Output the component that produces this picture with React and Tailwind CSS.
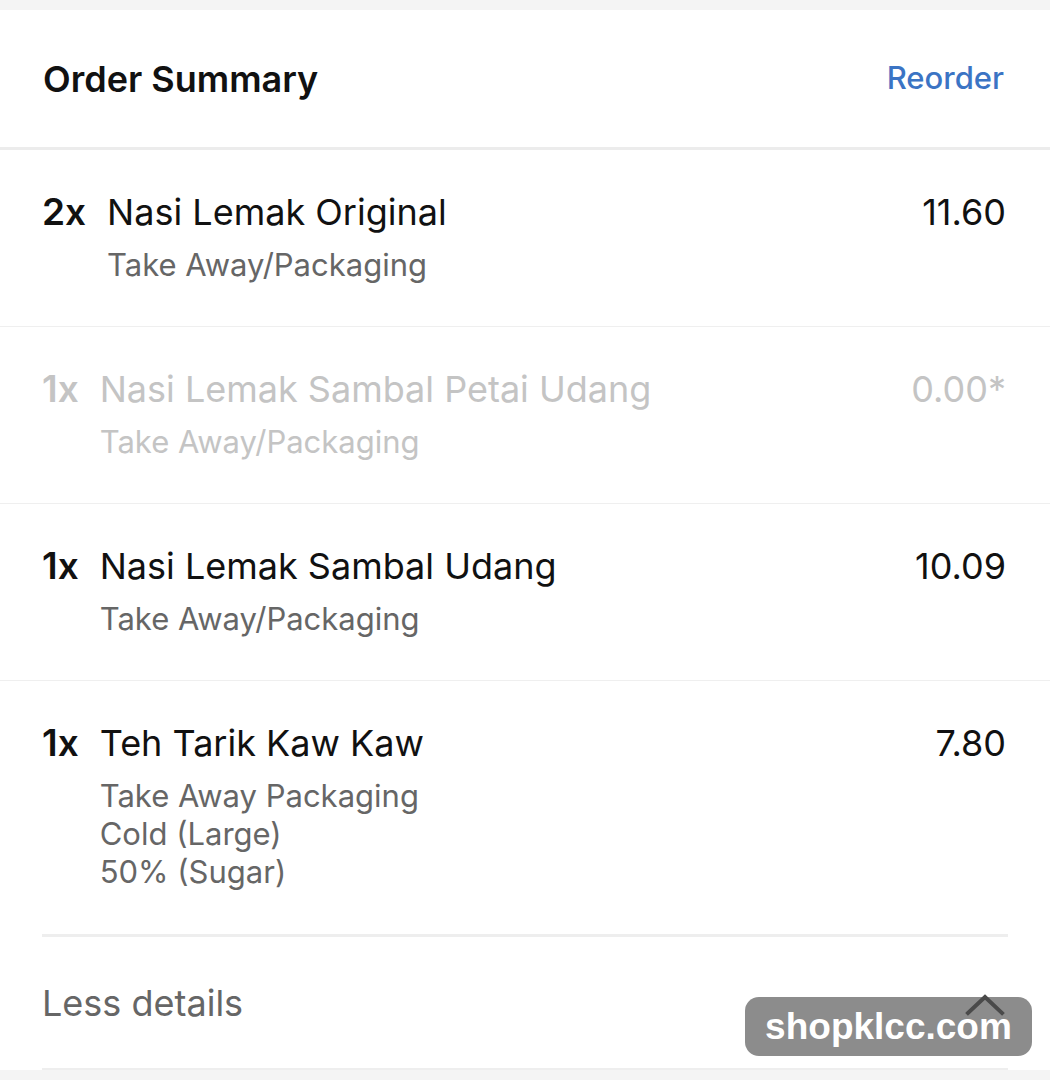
const items = [
  { qty: "2x", name: "Nasi Lemak Original", price: "11.60", notes: ["Take Away/Packaging"] },
  { qty: "1x", name: "Nasi Lemak Sambal Petai Udang", price: "0.00*", notes: ["Take Away/Packaging"], muted: true },
  { qty: "1x", name: "Nasi Lemak Sambal Udang", price: "10.09", notes: ["Take Away/Packaging"] },
  { qty: "1x", name: "Teh Tarik Kaw Kaw", price: "7.80", notes: ["Take Away Packaging", "Cold (Large)", "50% (Sugar)"] },
];

function ItemRow({ item, last }) {
  const main = item.muted ? "text-[#c4c4c4]" : "text-[#111111]";
  const sub = item.muted ? "text-[#c4c4c4]" : "text-[#666666]";
  return (
    <div className={`flex justify-between pl-[42px] pr-[44px] pt-[40px] ${last ? "pb-[43px]" : "pb-[42px] border-b border-[#efefef]"}`}>
      <div className="flex gap-[21px]">
        <span className={`text-[37px] leading-[44px] font-semibold ${main}`}>{item.qty}</span>
        <div className="flex flex-col">
          <span className={`text-[36px] leading-[44px] ${main}`}>{item.name}</span>
          <div className="mt-[12px] flex flex-col">
            {item.notes.map((n) => (
              <span key={n} className={`text-[31px] leading-[38px] ${sub}`}>{n}</span>
            ))}
          </div>
        </div>
      </div>
      <span className={`text-[36px] leading-[44px] ${main}`}>{item.price}</span>
    </div>
  );
}

export default function App() {
  return (
    <div className="w-[1050px] h-[1080px] overflow-hidden bg-[#f4f4f4] pt-[10px] font-['Inter',sans-serif]">
      <div className="bg-white">
        <div className="h-[140px] flex items-center justify-between pl-[43px] pr-[46px] border-b-[3px] border-[#ececec]">
          <h1 className="text-[36px] font-semibold text-[#111111]">Order Summary</h1>
          <a href="#" className="text-[31px] font-medium text-[#3b74c4]">Reorder</a>
        </div>
        {items.map((it, i) => (
          <ItemRow key={i} item={it} last={i === items.length - 1} />
        ))}
        <div className="mx-[42px] border-t-[3px] border-b-[2px] border-[#eeeeee] relative">
          <div className="h-[131px] flex items-center justify-between">
            <span className="text-[36px] text-[#666666]">Less details</span>
          </div>
          <svg className="absolute right-[3px] top-[55px] z-20" width="40" height="24" viewBox="0 0 40 24" fill="none" stroke="#4a4a4a" strokeWidth="4" strokeLinecap="square">
            <polyline points="3,21 20,5 37,21" />
          </svg>
          <div className="absolute left-[703px] top-[60px] w-[287px] h-[59px] rounded-[14px] bg-[#8c8c8c] flex items-center justify-center z-10">
            <span className="font-['Liberation_Sans',sans-serif] font-bold text-white text-[37px] leading-none">shopklcc.com</span>
          </div>
        </div>
      </div>
    </div>
  );
}
